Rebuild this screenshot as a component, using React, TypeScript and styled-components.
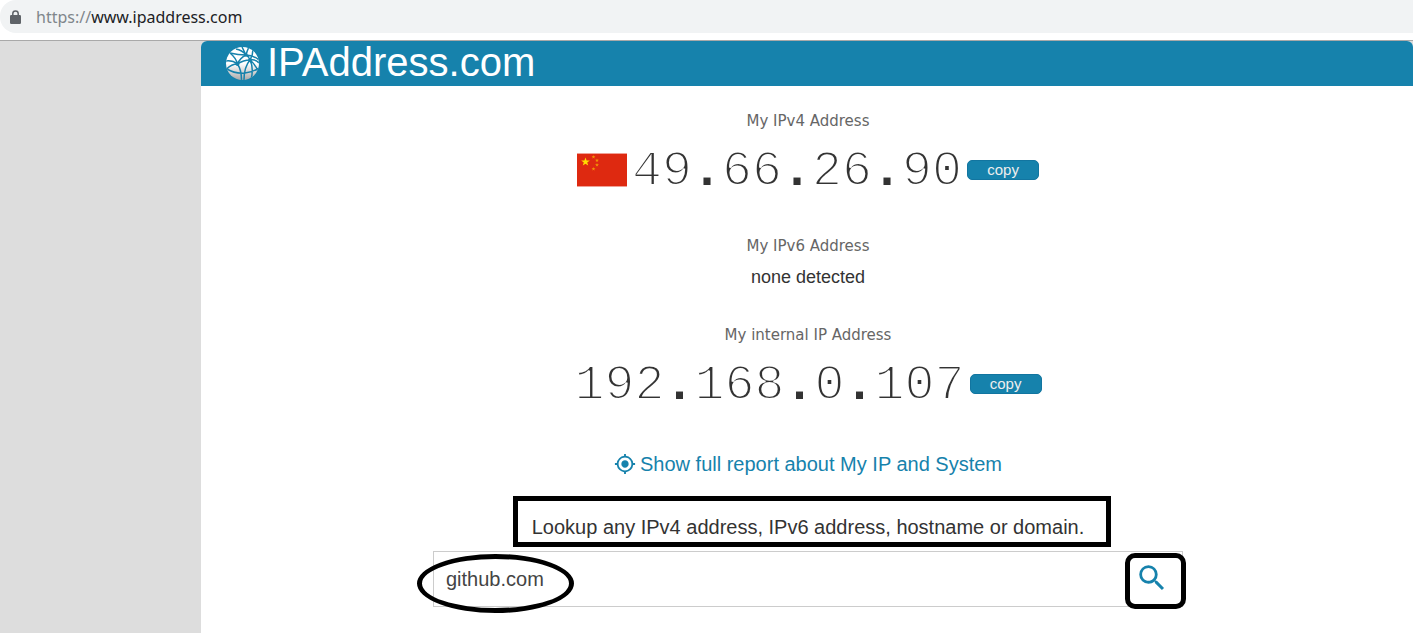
import React, { useState } from "react";
import styled, { createGlobalStyle } from "styled-components";

const blue = "#1682ac";

const GlobalStyle = createGlobalStyle`
  * { box-sizing: border-box; }
  body {
    margin: 0;
    background: #fff;
    color: #333;
    font-family: Arial, "Liberation Sans", sans-serif;
  }
`;

const Page = styled.div`
  min-height: 100vh;
  display: flex;
  flex-direction: column;
  overflow-x: hidden;
`;

const BrowserBar = styled.div`
  height: 41px;
  padding-bottom: 7px;
  border-bottom: 1px solid #a9a9a9;
  background: #fff;
`;

const AddressField = styled.div`
  height: 33px;
  display: flex;
  align-items: center;
  gap: 15px;
  padding-left: 10px;
  background: #f1f3f4;
  border-radius: 16px 0 0 16px;
  font: 16px/24px "Segoe UI", "Noto Sans", sans-serif;
  color: #202124;
`;

const Scheme = styled.span`
  color: #80868b;
`;

const Body = styled.div`
  flex: 1;
  display: flex;
  padding-left: 201px;
  background: #ddd;
`;

const Site = styled.div`
  flex: 1;
  background: #fff;
  border-top-left-radius: 6px;
  border-top-right-radius: 6px;
`;

const Header = styled.header`
  height: 45px;
  display: flex;
  align-items: center;
  gap: 7px;
  padding-left: 24px;
  background: ${blue};
  border-radius: 6px 6px 0 0;
`;

const Brand = styled.a`
  padding-bottom: 2px;
  color: #fff;
  font-size: 40px;
  line-height: 43px;
  text-decoration: none;
`;

const Main = styled.main`
  display: flex;
  flex-direction: column;
  align-items: center;
  padding: 25px 0 0 2px;
`;

const Section = styled.section`
  display: flex;
  flex-direction: column;
  align-items: center;
`;

const Label = styled.h2`
  margin: 0;
  font: 15px/20px Verdana, "DejaVu Sans", sans-serif;
  color: #666;
`;

const AddressRow = styled.div`
  display: flex;
  align-items: center;
  gap: 5px;
  height: 60px;
  margin: 9px 0 36px;
`;

const AddressText = styled.span`
  padding-top: 4px;
  font: 50px/56px "Liberation Mono", monospace;
  -webkit-text-stroke: 2px #fff;
`;

const Dot = styled.span`
  font-weight: bold;
  -webkit-text-stroke: 0;
`;

const CopyButton = styled.button`
  width: 72px;
  height: 20px;
  padding: 0;
  border: 1px solid #1275a0;
  border-radius: 5px;
  background: ${blue};
  color: #eee;
  font: 15px/18px Arial, "Liberation Sans", sans-serif;
`;

const Note = styled.p`
  margin: 10px 0 37px;
  font-size: 18px;
  line-height: 22px;
`;

const ReportLink = styled.a`
  display: flex;
  align-items: center;
  gap: 4px;
  margin-top: 2px;
  color: ${blue};
  font-size: 20px;
  line-height: 24px;
  text-decoration: none;
`;

const LookupForm = styled.form`
  width: 750px;
  max-width: 100%;
  margin-top: 39px;
  display: flex;
  flex-direction: column;
`;

const LookupLabel = styled.label`
  position: relative;
  align-self: center;
  font-size: 20px;
  line-height: 24px;
`;

const SearchBox = styled.div`
  position: relative;
  display: flex;
  margin-top: 12px;
  height: 56px;
  border: 1px solid #ccc;
`;

const SearchInput = styled.input`
  flex: 1;
  min-width: 0;
  padding: 0 12px;
  border: 0;
  outline: 0;
  background: transparent;
  color: #444;
  font: 20px/24px Arial, "Liberation Sans", sans-serif;
`;

const SearchButton = styled.button`
  width: 60px;
  padding: 0;
  border: 0;
  background: transparent;
  color: ${blue};
`;

const BoxMark = styled.span`
  position: absolute;
  inset: -19px -27px -8px -19px;
  border: 5px solid #000;
`;

const OvalMark = styled.span`
  position: absolute;
  left: -17px;
  top: 2px;
  width: 157px;
  height: 59px;
  border: 5px solid #000;
  border-radius: 50%;
  pointer-events: none;
`;

const ButtonMark = styled.span`
  position: absolute;
  right: -4px;
  top: 1px;
  width: 61px;
  height: 56px;
  border: 5px solid #000;
  border-radius: 10px;
  pointer-events: none;
`;

const LockIcon = () => (
  <svg width="11" height="14" viewBox="0 0 11 14" aria-hidden="true">
    <path d="M2.8 6V3.6a2.7 2.7 0 0 1 5.4 0V6" fill="none" stroke="#5f6368" strokeWidth="1.5" />
    <rect y="5" width="11" height="9" rx="1.2" fill="#5f6368" />
  </svg>
);

const GlobeIcon = () => (
  <svg width="35" height="35" viewBox="-1 -1 35 35" aria-hidden="true">
    <defs>
      <linearGradient id="globe" x1="0" y1="0" x2="0" y2="1">
        <stop offset="0.5" stopColor="#fff" />
        <stop offset="1" stopColor="#aaa" />
      </linearGradient>
      <clipPath id="disc"><circle cx="16.5" cy="16.5" r="16.5" /></clipPath>
    </defs>
    <circle cx="16.5" cy="16.5" r="16.5" fill="url(#globe)" />
    <g clipPath="url(#disc)" fill="none" stroke={blue} strokeWidth="1.5">
      <path d="M4 6q8 2 16 2M10 2q6 1 10 6M16 0q2 4 4 8M23 0q-2 4-3 8M20 8q7 0 13 5M20 8q3 2 4 5" />
      <path d="M20 8q-6 3-8.500 9M11.500 17q-5-4-12-3M4 6q6 5 7.500 11M11.500 17q6-4 12.500-4M24 13q6-1 9 3M24 13q3-5 3-11" />
      <path d="M11.500 17q-6 0-11 5M11.500 17q4 6 4 16M24 13q-6 7-6 20M24 13q4 8 1 20M24 13q5 4 8 11M1 22q8 5 18 4 8-1 14-5" />
    </g>
    <g fill={blue}>
      <circle cx="11.500" cy="17" r="2" />
      <circle cx="20" cy="8" r="1.800" />
      <circle cx="24" cy="13" r="1.900" />
    </g>
  </svg>
);

const star = "M0-5 1.2-1.6H4.8L1.9.6 3 4 0 2-3 4-1.9.6-4.8-1.6H-1.2Z";

const Flag = () => (
  <svg width="50" height="34" viewBox="0 0 50 34" role="img" aria-label="China">
    <rect width="50" height="34" fill="#f0a095" />
    <rect y="1" width="50" height="32" fill="#de2910" />
    <g fill="#ffde00">
      <path d={star} transform="translate(8.5 9) scale(.9)" />
      <g opacity="0.6">
        <path d={star} transform="translate(16.5 4) scale(.4)" />
        <path d={star} transform="translate(20 7.5) scale(.4)" />
        <path d={star} transform="translate(20 12) scale(.4)" />
        <path d={star} transform="translate(16.5 16) scale(.4)" />
      </g>
    </g>
  </svg>
);

const TargetIcon = () => (
  <svg width="22" height="22" viewBox="0 0 24 24" fill="currentColor" aria-hidden="true">
    <path d="M12 8c-2.210 0-4 1.790-4 4s1.790 4 4 4 4-1.790 4-4-1.790-4-4-4zm8.940 3A8.994 8.994 0 0 0 13 3.060V1h-2v2.060A8.994 8.994 0 0 0 3.060 11H1v2h2.060A8.994 8.994 0 0 0 11 20.940V23h2v-2.060A8.994 8.994 0 0 0 20.940 13H23v-2h-2.060zM12 19c-3.870 0-7-3.130-7-7s3.130-7 7-7 7 3.130 7 7-3.130 7-7 7z" />
  </svg>
);

const SearchIcon = () => (
  <svg width="34" height="34" viewBox="0 0 24 24" fill="currentColor" aria-hidden="true">
    <path d="M15.5 14h-.79l-.28-.27A6.471 6.471 0 0 0 16 9.5 6.5 6.5 0 1 0 9.5 16c1.61 0 3.09-.59 4.23-1.57l.27.28v.79l5 4.99L20.49 19l-4.99-5zm-6 0C7.01 14 5 11.99 5 9.5S7.01 5 9.5 5 14 7.01 14 9.5 11.99 14 9.5 14z" />
  </svg>
);

const Address = ({ value }: { value: string }) => (
  <AddressText>
    {value.split(".").map((part, i) => (
      <React.Fragment key={i}>
        {i > 0 && <Dot>.</Dot>}
        {part}
      </React.Fragment>
    ))}
  </AddressText>
);

export default function App() {
  const [query, setQuery] = useState("github.com");
  const copy = (text: string) => navigator.clipboard?.writeText(text);

  return (
    <Page>
      <GlobalStyle />
      <BrowserBar>
        <AddressField>
          <LockIcon />
          <span><Scheme>https://</Scheme>www.ipaddress.com</span>
        </AddressField>
      </BrowserBar>
      <Body>
        <Site>
          <Header>
            <GlobeIcon />
            <Brand href="#">IPAddress.com</Brand>
          </Header>
          <Main>
            <Section>
              <Label>My IPv4 Address</Label>
              <AddressRow>
                <Flag />
                <Address value="49.66.26.90" />
                <CopyButton onClick={() => copy("49.66.26.90")}>copy</CopyButton>
              </AddressRow>
            </Section>
            <Section>
              <Label>My IPv6 Address</Label>
              <Note>none detected</Note>
            </Section>
            <Section>
              <Label>My internal IP Address</Label>
              <AddressRow>
                <Address value="192.168.0.107" />
                <CopyButton onClick={() => copy("192.168.0.107")}>copy</CopyButton>
              </AddressRow>
            </Section>
            <ReportLink href="#report">
              <TargetIcon />
              Show full report about My IP and System
            </ReportLink>
            <LookupForm onSubmit={(e) => e.preventDefault()}>
              <LookupLabel htmlFor="host">
                Lookup any IPv4 address, IPv6 address, hostname or domain.
                <BoxMark />
              </LookupLabel>
              <SearchBox>
                <SearchInput id="host" value={query} onChange={(e) => setQuery(e.target.value)} />
                <SearchButton type="submit" aria-label="Search">
                  <SearchIcon />
                </SearchButton>
                <OvalMark />
                <ButtonMark />
              </SearchBox>
            </LookupForm>
          </Main>
        </Site>
      </Body>
    </Page>
  );
}
